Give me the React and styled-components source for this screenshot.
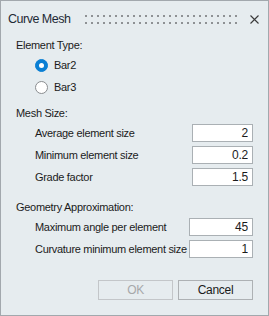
import React from "react";
import styled, { createGlobalStyle } from "styled-components";

const GlobalStyle = createGlobalStyle`
  html, body { margin: 0; padding: 0; background: #ffffff; }
  body { font-family: "Liberation Sans", Arial, sans-serif; }
  * { box-sizing: border-box; }
`;

const Dialog = styled.div`
  width: 269px;
  height: 316px;
  border: 1px solid #a2a8ad;
  background: #e6ecef;
  display: flex;
  flex-direction: column;
  color: #1b1b1b;
  font-size: 11px;
  letter-spacing: -0.3px;
`;

const TitleBar = styled.div`
  height: 36px;
  display: flex;
  align-items: center;
  padding: 0 9px 0 7px;
`;

const Title = styled.div`
  font-size: 12.5px;
  letter-spacing: -0.5px;
  line-height: 16px;
  white-space: nowrap;
  color: #1e2a36;
`;

const GripSvg = styled.svg`
  flex: 1;
  height: 9px;
  margin: 0 9px 0 15px;
  display: block;
`;

const CloseButton = styled.button`
  width: 9px;
  height: 9px;
  padding: 0;
  border: 0;
  background: transparent;
  display: block;
  svg { display: block; }
`;

const Body = styled.div`
  flex: 1;
  display: flex;
  flex-direction: column;
  padding: 0 15px 15px 15px;
`;

const SectionLabel = styled.div`
  line-height: 16px;
  height: 16px;
  margin-top: ${(p) => p.$gap || 0}px;
  white-space: nowrap;
`;

const Group = styled.div`
  display: flex;
  flex-direction: column;
  margin-top: 1px;
  padding-left: 19px;
`;

const RadioRow = styled.label`
  height: 22px;
  display: flex;
  align-items: center;
  gap: 6px;
`;

const RadioDot = styled.span`
  width: 13px;
  height: 13px;
  border-radius: 50%;
  flex: none;
  display: flex;
  align-items: center;
  justify-content: center;
  background: ${(p) => (p.$checked ? "#0a7fd4" : "#ffffff")};
  border: 1px solid ${(p) => (p.$checked ? "#0a7fd4" : "#8a8d90")};
  &::after {
    content: "";
    width: 5px;
    height: 5px;
    border-radius: 50%;
    background: #ffffff;
    display: ${(p) => (p.$checked ? "block" : "none")};
  }
`;

const FieldRow = styled.div`
  height: 22px;
  display: flex;
  align-items: center;
`;

const FieldLabel = styled.span`
  flex: 1;
  white-space: nowrap;
`;

const Input = styled.input`
  width: ${(p) => p.$w}px;
  height: 18px;
  border: 1px solid #aab0b4;
  background: #ffffff;
  font: inherit;
  font-size: 12px;
  letter-spacing: -0.2px;
  color: #1b1b1b;
  text-align: right;
  padding: 0 4px 0 2px;
  outline: none;
`;

const Footer = styled.div`
  margin-top: auto;
  display: flex;
  justify-content: flex-end;
  gap: 5px;
`;

const Button = styled.button`
  width: 75px;
  height: 20px;
  border: 1px solid ${(p) => (p.disabled ? "#c3c6c9" : "#adb1b4")};
  background: #e6ecef;
  color: ${(p) => (p.disabled ? "#a6a8aa" : "#1b1b1b")};
  font: inherit;
  font-size: 12px;
  letter-spacing: -0.3px;
  padding: 0;
`;

function Grip() {
  return (
    <GripSvg>
      <defs>
        <pattern id="grip" width="6" height="7" patternUnits="userSpaceOnUse">
          <rect x="0" y="0" width="2" height="2" fill="#8e9194" />
        </pattern>
      </defs>
      <rect x="0" y="0" width="100%" height="9" fill="url(#grip)" />
    </GripSvg>
  );
}

function Radio({ checked, label }) {
  return (
    <RadioRow>
      <RadioDot $checked={checked} />
      <span>{label}</span>
    </RadioRow>
  );
}

function Field({ label, value, w }) {
  return (
    <FieldRow>
      <FieldLabel>{label}</FieldLabel>
      <Input $w={w} defaultValue={value} />
    </FieldRow>
  );
}

export default function App() {
  return (
    <>
      <GlobalStyle />
      <Dialog>
        <TitleBar>
          <Title>Curve Mesh</Title>
          <Grip />
          <CloseButton aria-label="Close">
            <svg width="9" height="9" viewBox="0 0 9 9">
              <path d="M0.5 0.5 L8.5 8.5 M8.5 0.5 L0.5 8.5" stroke="#3a3a3a" strokeWidth="1.1" />
            </svg>
          </CloseButton>
        </TitleBar>
        <Body>
          <SectionLabel>Element Type:</SectionLabel>
          <Group>
            <Radio checked label="Bar2" />
            <Radio label="Bar3" />
          </Group>
          <SectionLabel $gap={7}>Mesh Size:</SectionLabel>
          <Group>
            <Field label="Average element size" value="2" w={61} />
            <Field label="Minimum element size" value="0.2" w={61} />
            <Field label="Grade factor" value="1.5" w={61} />
          </Group>
          <SectionLabel $gap={11}>Geometry Approximation:</SectionLabel>
          <Group>
            <Field label="Maximum angle per element" value="45" w={64} />
            <Field label="Curvature minimum element size" value="1" w={64} />
          </Group>
          <Footer>
            <Button disabled>OK</Button>
            <Button>Cancel</Button>
          </Footer>
        </Body>
      </Dialog>
    </>
  );
}
